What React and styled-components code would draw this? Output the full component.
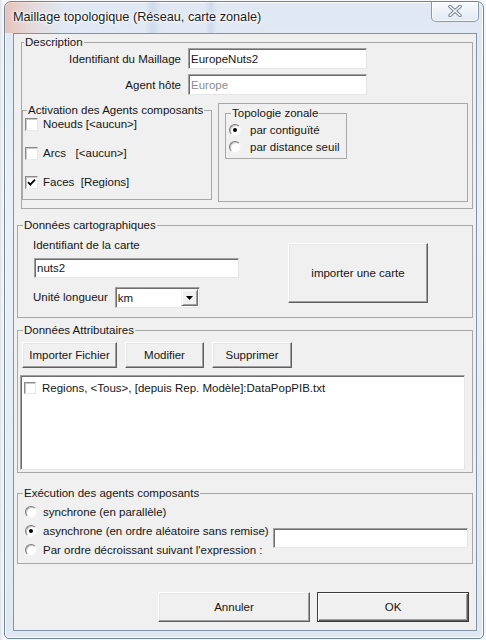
import React from "react";
import styled, { createGlobalStyle, css } from "styled-components";

const Global = createGlobalStyle`
  html, body { margin: 0; padding: 0; }
  body {
    width: 486px; height: 640px; overflow: hidden;
    background: #f4f5f7;
    font-family: "Liberation Sans", Arial, sans-serif;
  }
  * { box-sizing: border-box; }
`;

const Desktop = styled.div`
  width: 486px;
  height: 640px;
  padding: 1px 2px 0 4px;
  background: linear-gradient(90deg, #dfe3e8 0, #f6f7f9 3px);
`;

const Window = styled.div`
  width: 480px;
  height: 638px;
  border: 1px solid #71859a;
  border-radius: 7px 7px 5px 5px;
  background: linear-gradient(180deg, #dfe8f3 0%, #e9f0f8 35%, #dfe8f2 100%);
  box-shadow: inset 0 0 0 1px rgba(255, 255, 255, 0.8);
  display: flex;
  flex-direction: column;
  overflow: hidden;
`;

const TitleBar = styled.div`
  height: 31px;
  display: flex;
  align-items: flex-start;
  padding-left: 8px;
  background:
    linear-gradient(90deg, rgba(236, 150, 120, 0.45) 0, rgba(240, 190, 175, 0.3) 30px, rgba(255, 255, 255, 0) 60px),
    linear-gradient(90deg, rgba(255,255,255,0) 140px, rgba(150, 175, 210, 0.25) 148px, rgba(255,255,255,0) 156px,
      rgba(255,255,255,0) 200px, rgba(150, 175, 210, 0.25) 206px, rgba(255,255,255,0) 212px);
`;

const Title = styled.div`
  margin-top: 7px;
  font-family: "Liberation Sans", Arial, sans-serif;
  font-size: 12.7px;
  line-height: 16px;
  color: #1a1a1a;
  text-shadow: 0 0 5px #fff, 0 0 3px #fff, 0 0 2px #fff;
  white-space: nowrap;
`;

const CloseBtn = styled.div`
  margin: -1px 4px 0 auto;
  width: 48px;
  height: 21px;
  border: 1px solid #8a9aab;
  border-top: none;
  border-radius: 0 0 5px 5px;
  background: linear-gradient(180deg, rgba(255,255,255,0.85), rgba(225, 234, 244, 0.7));
  box-shadow: inset 0 0 0 1px rgba(255, 255, 255, 0.7);
  display: flex;
  align-items: center;
  justify-content: center;
`;

const Client = styled.div`
  margin-left: 8px;
  width: 464px;
  height: 598px;
  border: 1px solid #8393a4;
  background: #f0f0f0;
  display: flex;
  flex-direction: column;
  align-items: flex-start;
  font-family: "Liberation Sans", Arial, sans-serif;
  font-size: 11.5px;
  color: #151515;
`;

const Frame = styled.fieldset`
  margin: ${(p) => p.$m || 0};
  padding: 0;
  min-width: 0;
  width: ${(p) => p.$w}px;
  height: ${(p) => p.$h}px;
  border: 1px solid #a8a8a8;
  flex: none;
`;

const Caption = styled.legend`
  margin-left: ${(p) => (p.$off ?? 5)}px;
  padding: 0 1px;
  line-height: 13px;
  font-size: 11.5px;
  color: #151515;
  white-space: nowrap;
`;

const Pane = styled.div`
  width: ${(p) => p.$w}px;
  height: ${(p) => p.$h}px;
  border: 1px solid #a8a8a8;
  padding: 3px 0 0 6px;
  flex: none;
`;

const DescBody = styled.div`
  display: flex;
  flex-direction: column;
`;

const FieldGrid = styled.div`
  margin-top: -1px;
  display: grid;
  grid-template-columns: 159px 179px;
  column-gap: 7px;
  row-gap: 5px;
  align-items: center;
`;

const FieldLabel = styled.span`
  text-align: right;
  white-space: nowrap;
`;

const Panes = styled.div`
  margin-top: 8px;
  display: flex;
  align-items: flex-start;
  gap: 6px;
`;

const TextBox = styled.div`
  width: ${(p) => p.$w}px;
  height: ${(p) => p.$h}px;
  margin: ${(p) => p.$m || 0};
  flex: none;
  background: #fff;
  border-style: solid;
  border-width: 1px;
  border-color: #a0a0a0 #e6e6e6 #e6e6e6 #a0a0a0;
  box-shadow: inset 1px 1px 0 #6d6d6d;
  padding-left: 2px;
  display: flex;
  align-items: center;
  color: ${(p) => (p.$dim ? "#8c8c8c" : "#151515")};
  white-space: nowrap;
`;

const ComboBox = styled(TextBox)`
  justify-content: space-between;
  padding-right: 1px;
`;

const DropBtn = styled.span`
  width: 17px;
  height: 17px;
  background: #f0f0f0;
  border: 1px solid;
  border-color: #f0f0f0 #6d6d6d #6d6d6d #f0f0f0;
  box-shadow: inset 1px 1px 0 #fff, inset -1px -1px 0 #a0a0a0;
  display: flex;
  align-items: center;
  justify-content: center;
`;

const Btn = styled.div`
  width: ${(p) => p.$w}px;
  height: ${(p) => p.$h}px;
  margin: ${(p) => p.$m || 0};
  flex: none;
  background: #f0f0f0;
  border: 1px solid;
  border-color: #fff #5f5f5f #5f5f5f #fff;
  box-shadow: inset -1px -1px 0 #a0a0a0, inset 1px 1px 0 #e6e6e6;
  display: flex;
  align-items: center;
  justify-content: center;
  color: #151515;
  white-space: nowrap;
  ${(p) =>
    p.$default &&
    css`
      border-color: #3a3a3a;
      box-shadow: inset 1px 1px 0 #fff, inset -1px -1px 0 #5f5f5f, inset -2px -2px 0 #a0a0a0;
    `}
`;

const CheckCol = styled.div`
  padding: 0 0 0 2px;
  display: flex;
  flex-direction: column;
  gap: 15px;
`;

const OptionRow = styled.div`
  height: 14px;
  display: flex;
  align-items: center;
  gap: ${(p) => p.$gap ?? 6}px;
  white-space: pre;
`;

const CheckBox = styled.span`
  width: ${(p) => p.$s ?? 13}px;
  height: ${(p) => p.$s ?? 13}px;
  flex: none;
  background: #fff;
  border: 1px solid;
  border-color: #8a8a8a #e8e8e8 #e8e8e8 #8a8a8a;
  box-shadow: inset 1px 1px 0 #c8c8c8;
  display: flex;
  align-items: center;
  justify-content: center;
`;

const Radio = styled.span`
  width: 12px;
  height: 12px;
  flex: none;
  border-radius: 50%;
  background: #fff;
  border: 1px solid;
  border-color: #7a7a7a #f4f4f4 #f4f4f4 #7a7a7a;
  box-shadow: inset 1px 1px 0 #c4c4c4;
  display: flex;
  align-items: center;
  justify-content: center;
  &::after {
    content: "";
    width: 4px;
    height: 4px;
    border-radius: 50%;
    background: ${(p) => (p.$on ? "#000" : "transparent")};
  }
`;

const TopoBody = styled.div`
  padding: 3px 0 0 3px;
  display: flex;
  flex-direction: column;
  gap: 3px;
`;

const CartoBody = styled.div`
  display: flex;
  align-items: flex-start;
`;

const CartoLeft = styled.div`
  padding: 7px 0 0 15px;
  display: flex;
  flex-direction: column;
  align-items: flex-start;
`;

const PlainLabel = styled.span`
  line-height: 13px;
  white-space: nowrap;
`;

const UnitRow = styled.div`
  margin-top: 9px;
  display: flex;
  align-items: center;
  gap: 7px;
`;

const AttrBody = styled.div`
  display: flex;
  flex-direction: column;
  align-items: flex-start;
`;

const BtnRow = styled.div`
  margin: 5px 0 0 4px;
  display: flex;
  gap: 8px;
`;

const ListBox = styled(TextBox)`
  flex-direction: column;
  align-items: flex-start;
  justify-content: flex-start;
  padding: 6px 0 0 3px;
`;

const ListItem = styled.div`
  display: flex;
  align-items: center;
  gap: 6px;
  white-space: nowrap;
`;

const ExecBody = styled.div`
  padding: 5px 0 0 7px;
  display: flex;
  flex-direction: column;
  gap: 5px;
  width: 100%;
`;

const ExecSplit = styled.div`
  display: flex;
  align-items: flex-start;
`;

const ExecOptions = styled.div`
  display: flex;
  flex-direction: column;
  gap: 5px;
`;

const Footer = styled.div`
  align-self: stretch;
  margin-top: 28px;
  padding-right: 7px;
  display: flex;
  justify-content: flex-end;
  gap: 7px;
`;

const Check = () => (
  <svg width="9" height="9" viewBox="0 0 9 9">
    <path d="M1 4.2 L3.3 6.6 L8 1.6" fill="none" stroke="#000" strokeWidth="1.8" />
  </svg>
);

const CloseGlyph = () => (
  <svg width="14" height="12" viewBox="0 0 14 12">
    <path d="M2 1.5 L12 10.5 M12 1.5 L2 10.5" stroke="#7b8594" strokeWidth="3.6" strokeLinecap="round" />
    <path d="M2 1.5 L12 10.5 M12 1.5 L2 10.5" stroke="#f4f7fb" strokeWidth="1.6" strokeLinecap="round" />
  </svg>
);

const Arrow = () => (
  <svg width="7" height="4" viewBox="0 0 7 4">
    <path d="M0 0 H7 L3.5 4 Z" fill="#000" />
  </svg>
);

export default function App() {
  return (
    <>
      <Global />
      <Desktop>
        <Window>
          <TitleBar>
            <Title>Maillage topologique (Réseau, carte zonale)</Title>
            <CloseBtn>
              <CloseGlyph />
            </CloseBtn>
          </TitleBar>
          <Client>
            <Frame $w={452} $h={173} $m="2px 0 0 7px">
              <Caption $off={2}>Description</Caption>
              <DescBody>
                <FieldGrid>
                  <FieldLabel>Identifiant du Maillage</FieldLabel>
                  <TextBox $w={179} $h={21}>EuropeNuts2</TextBox>
                  <FieldLabel>Agent hôte</FieldLabel>
                  <TextBox $w={179} $h={21} $dim>Europe</TextBox>
                </FieldGrid>
                <Panes>
                  <Frame $w={190} $h={96} $m="1px 0 0 0">
                    <Caption $off={4}>Activation des Agents composants</Caption>
                    <CheckCol>
                      <OptionRow $gap={5}>
                        <CheckBox />
                        <span>Noeuds [&lt;aucun&gt;]</span>
                      </OptionRow>
                      <OptionRow $gap={5}>
                        <CheckBox />
                        <span>Arcs   [&lt;aucun&gt;]</span>
                      </OptionRow>
                      <OptionRow $gap={5}>
                        <CheckBox>
                          <Check />
                        </CheckBox>
                        <span>Faces  [Regions]</span>
                      </OptionRow>
                    </CheckCol>
                  </Frame>
                  <Pane $w={250} $h={99}>
                    <Frame $w={122} $h={52}>
                      <Caption $off={5}>Topologie zonale</Caption>
                      <TopoBody>
                        <OptionRow $gap={9}>
                          <Radio $on />
                          <span>par contiguïté</span>
                        </OptionRow>
                        <OptionRow $gap={9}>
                          <Radio />
                          <span>par distance seuil</span>
                        </OptionRow>
                      </TopoBody>
                    </Frame>
                  </Pane>
                </Panes>
              </DescBody>
            </Frame>

            <Frame $w={456} $h={99} $m="10px 0 0 3px">
              <Caption>Données cartographiques</Caption>
              <CartoBody>
                <CartoLeft>
                  <PlainLabel>Identifiant de la carte</PlainLabel>
                  <TextBox $w={205} $h={20} $m="6px 0 0 1px">nuts2</TextBox>
                  <UnitRow>
                    <PlainLabel>Unité longueur</PlainLabel>
                    <ComboBox $w={85} $h={21}>
                      <span>km</span>
                      <DropBtn>
                        <Arrow />
                      </DropBtn>
                    </ComboBox>
                  </UnitRow>
                </CartoLeft>
                <Btn $w={140} $h={60} $m="11px 0 0 49px">importer une carte</Btn>
              </CartoBody>
            </Frame>

            <Frame $w={456} $h={149} $m="6px 0 0 3px">
              <Caption>Données Attributaires</Caption>
              <AttrBody>
                <BtnRow>
                  <Btn $w={95} $h={26}>Importer Fichier</Btn>
                  <Btn $w={79} $h={26}>Modifier</Btn>
                  <Btn $w={80} $h={26}>Supprimer</Btn>
                </BtnRow>
                <ListBox $w={445} $h={95} $m="7px 0 0 2px">
                  <ListItem>
                    <CheckBox $s={12} />
                    <span>Regions, &lt;Tous&gt;, [depuis Rep. Modèle]:DataPopPIB.txt</span>
                  </ListItem>
                </ListBox>
              </AttrBody>
            </Frame>

            <Frame $w={456} $h={77} $m="14px 0 0 3px">
              <Caption>Exécution des agents composants</Caption>
              <ExecBody>
                <OptionRow>
                  <Radio />
                  <span>synchrone (en parallèle)</span>
                </OptionRow>
                <ExecSplit>
                  <ExecOptions>
                    <OptionRow>
                      <Radio $on />
                      <span>asynchrone (en ordre aléatoire sans remise)</span>
                    </OptionRow>
                    <OptionRow>
                      <Radio />
                      <span>Par ordre décroissant suivant l'expression :</span>
                    </OptionRow>
                  </ExecOptions>
                  <TextBox $w={195} $h={20} $m="4px 4px 0 auto" />
                </ExecSplit>
              </ExecBody>
            </Frame>

            <Footer>
              <Btn $w={152} $h={30}>Annuler</Btn>
              <Btn $w={152} $h={30} $default>OK</Btn>
            </Footer>
          </Client>
        </Window>
      </Desktop>
    </>
  );
}
